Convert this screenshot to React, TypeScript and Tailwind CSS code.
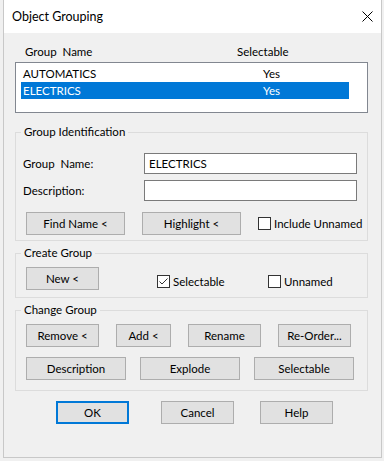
import React from 'react';

type BtnProps = { label: string; className?: string; primary?: boolean };

function Btn({ label, className = '', primary }: BtnProps) {
  return (
    <button
      className={`h-[23px] shrink-0 bg-[#e1e1e1] text-[11.5px] text-black flex items-center justify-center whitespace-nowrap ${
        primary ? 'border-2 border-[#0078d7]' : 'border border-[#adadad]'
      } ${className}`}
    >
      {label}
    </button>
  );
}

function Check({ label, checked, className = '' }: { label: string; checked?: boolean; className?: string }) {
  return (
    <label className={`h-[13px] flex items-center whitespace-nowrap ${className}`}>
      <span className="w-[13px] h-[13px] shrink-0 border border-[#333333] bg-white flex items-center justify-center">
        {checked && (
          <svg width="11" height="11" viewBox="0 0 11 11">
            <path d="M1.5 5.5 L4 8 L9.5 2.5" fill="none" stroke="#333333" strokeWidth="1" />
          </svg>
        )}
      </span>
      <span className="ml-[3px]">{label}</span>
    </label>
  );
}

function GroupBox({ title, className = '', children }: { title: string; className?: string; children: React.ReactNode }) {
  return (
    <fieldset className="w-[353px] min-w-0 border border-[#dcdcdc]">
      <legend className="ml-[5px] px-[3px] leading-[16px]">{title}</legend>
      <div className={className}>{children}</div>
    </fieldset>
  );
}

export default function App() {
  const groups = [
    { name: 'AUTOMATICS', selectable: 'Yes' },
    { name: 'ELECTRICS', selectable: 'Yes' },
  ];
  const selected = 1;

  return (
    <div className="w-[384px] h-[461px] bg-[#f0f0f0] text-[11.5px] leading-[16px] text-black font-['Lato',sans-serif]">
      <div className="ml-[3px] w-[379px] h-[458px] flex flex-col bg-[#f0f0f0] border-l border-r border-b border-[#c8c8c8]">
        {/* Title bar */}
        <div className="h-[33px] shrink-0 bg-white flex items-center justify-between pl-[8px] pr-[8px]">
          <span className="text-[12.5px]">Object Grouping</span>
          <svg width="11" height="11" viewBox="0 0 11 11">
            <path d="M0.5 0.5 L10.5 10.5 M10.5 0.5 L0.5 10.5" stroke="#000" strokeWidth="1" />
          </svg>
        </div>

        <div className="pl-[11px] flex flex-col">
          {/* List header */}
          <div className="mt-[11px] h-[16px] flex items-center pl-[10px] whitespace-pre">
            <span className="w-[212px]">Group  Name</span>
            <span>Selectable</span>
          </div>

          {/* Group list */}
          <div className="mt-[2px] h-[51px] w-[353px] border border-[#828790] bg-white pt-[2px] pl-[5px]">
            {groups.map((g, i) => (
              <div
                key={g.name}
                className={`h-[17px] w-[328px] flex items-center pl-[2px] ${
                  i === selected ? 'bg-[#0078d7] text-white' : ''
                }`}
              >
                <span className="w-[240px]">{g.name}</span>
                <span>{g.selectable}</span>
              </div>
            ))}
          </div>

          {/* Group Identification */}
          <div className="mt-[11px]">
            <GroupBox title="Group Identification" className="pl-[7px] pt-[13px] pb-[5px]">
              <div className="h-[21px] flex items-center">
                <span className="w-[121px] whitespace-pre">Group  Name:</span>
                <div className="w-[213px] h-[21px] border border-[#7a7a7a] bg-white flex items-center pl-[4px]">ELECTRICS</div>
              </div>
              <div className="mt-[6px] h-[21px] flex items-center">
                <span className="w-[121px]">Description:</span>
                <div className="w-[213px] h-[21px] border border-[#7a7a7a] bg-white" />
              </div>
              <div className="mt-[11px] flex items-center pl-[3px]">
                <Btn label="Find Name <" className="w-[99px]" />
                <Btn label="Highlight <" className="w-[99px] ml-[17px]" />
                <Check label="Include Unnamed" className="ml-[17px]" />
              </div>
            </GroupBox>
          </div>

          {/* Create Group */}
          <div className="mt-[4px]">
            <GroupBox title="Create Group" className="pl-[10px] pt-[6px] pb-[7px]">
              <div className="h-[23px] flex items-start">
                <Btn label="New <" className="w-[73px]" />
                <Check label="Selectable" checked className="ml-[58px] mt-[8px] w-[111px]" />
                <Check label="Unnamed" className="mt-[8px]" />
              </div>
            </GroupBox>
          </div>

          {/* Change Group */}
          <div className="mt-[4px]">
            <GroupBox title="Change Group" className="pl-[10px] pt-[6px] pb-[10px]">
              <div className="flex">
                <Btn label="Remove <" className="w-[73px]" />
                <Btn label="Add <" className="w-[55px] ml-[17px]" />
                <Btn label="Rename" className="w-[73px] ml-[17px]" />
                <Btn label="Re-Order..." className="w-[73px] ml-[17px]" />
              </div>
              <div className="mt-[10px] flex">
                <Btn label="Description" className="w-[100px]" />
                <Btn label="Explode" className="w-[100px] ml-[14px]" />
                <Btn label="Selectable" className="w-[100px] ml-[14px]" />
              </div>
            </GroupBox>
          </div>
        </div>

        {/* Dialog buttons */}
        <div className="mt-[10px] flex pl-[52px]">
          <Btn label="OK" primary className="w-[73px]" />
          <Btn label="Cancel" className="w-[73px] ml-[32px]" />
          <Btn label="Help" className="w-[73px] ml-[26px]" />
        </div>
      </div>
    </div>
  );
}
